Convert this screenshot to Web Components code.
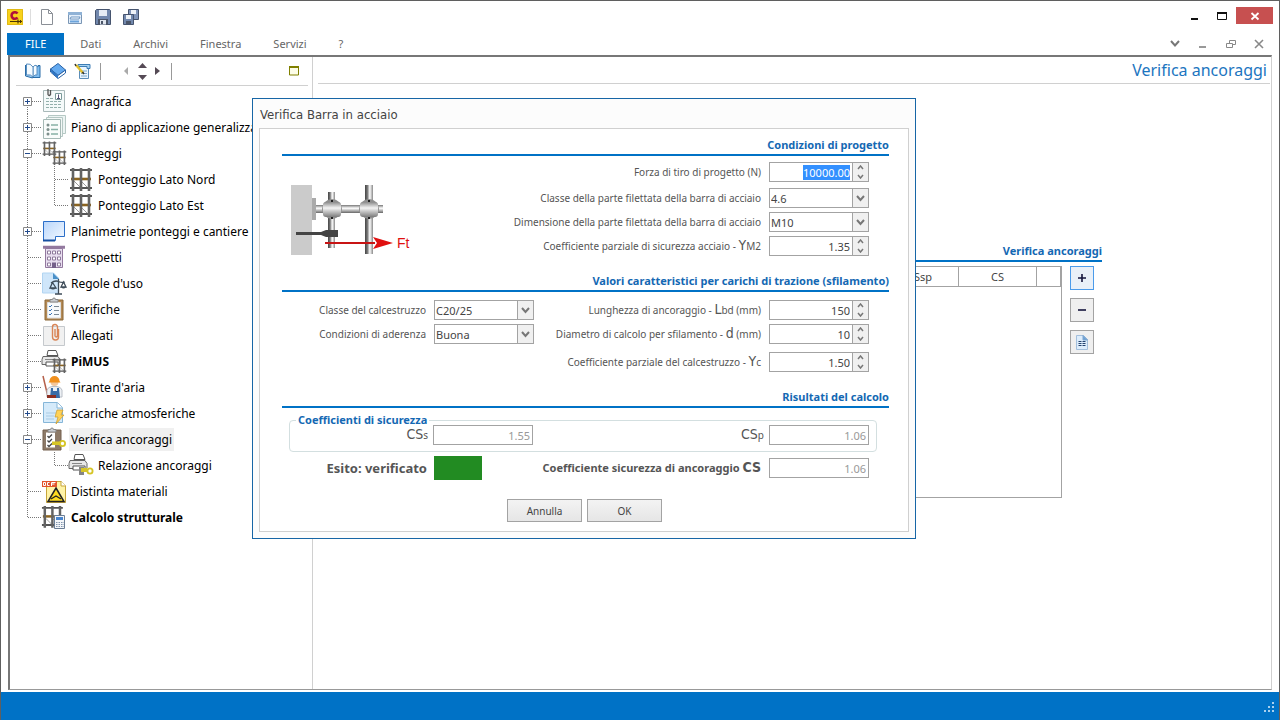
<!DOCTYPE html>
<html lang="it">
<head>
<meta charset="utf-8">
<title>Verifica ancoraggi</title>
<style>
  :root {
    --blue: #0072c6;
    --heading: #1468b3;
    --line: #a3a3a3;
    --soft-line: #d0d0d0;
    --text: #555;
    --font-ui: "Noto Sans", "Open Sans", sans-serif;
    --font-narrow: "DejaVu Sans Condensed", "DejaVu Sans", sans-serif;
    --fs-s: 10px;
    --fs-m: 11px;
    --fs-tree: 12px;
    --fs-l: 13px;
    --fs-xl: 16px;
  }
  html, body { height: 100%; margin: 0; }
  body { font-family: var(--font-ui); font-size: var(--fs-m); color: var(--text); background: #fff; }
  .sym { font-family: var(--font-narrow); font-size: 14px; line-height: 1; }
  .fields { display: flex; flex-direction: column; gap: 4px; }
  .lead { margin-bottom: 2px; }
  .spaced { margin-bottom: 4px; }
  .design { display: grid; grid-template-columns: auto 1fr; padding: 6px 20px 0 8px; }
  .design bar-diagram { align-self: end; }
  .columns { display: grid; grid-template-columns: 252px 1fr; padding: 8px 20px 0 0; align-items: start; }
  .outcome { padding-top: 4px; align-items: center; }
</style>
</head>
<body>
<app-window>
  <title-bar slot="top"></title-bar>
  <menu-bar slot="top"></menu-bar>

  <side-panel slot="side">
    <tree-item icon="anagrafica" toggle="plus" first>Anagrafica</tree-item>
    <tree-item icon="piano" toggle="plus">Piano di applicazione generalizzata</tree-item>
    <tree-item icon="ponteggi" toggle="minus">Ponteggi</tree-item>
    <tree-item icon="ponteggio" child>Ponteggio Lato Nord</tree-item>
    <tree-item icon="ponteggio" child last>Ponteggio Lato Est</tree-item>
    <tree-item icon="planimetrie" toggle="plus">Planimetrie ponteggi e cantiere</tree-item>
    <tree-item icon="prospetti">Prospetti</tree-item>
    <tree-item icon="regole">Regole d'uso</tree-item>
    <tree-item icon="verifiche">Verifiche</tree-item>
    <tree-item icon="allegati">Allegati</tree-item>
    <tree-item icon="pimus" bold>PiMUS</tree-item>
    <tree-item icon="tirante" toggle="plus">Tirante d'aria</tree-item>
    <tree-item icon="scariche" toggle="plus">Scariche atmosferiche</tree-item>
    <tree-item icon="ancoraggi" toggle="minus" selected>Verifica ancoraggi</tree-item>
    <tree-item icon="relazione" child last>Relazione ancoraggi</tree-item>
    <tree-item icon="distinta">Distinta materiali</tree-item>
    <tree-item icon="calcolo" bold last>Calcolo strutturale</tree-item>
  </side-panel>

  <work-area slot="main">
    <span slot="title">Verifica ancoraggi</span>
    <anchor-list></anchor-list>
  </work-area>

  <modal-dialog slot="dialog" heading="Verifica Barra in acciaio">
    <form-section heading="Condizioni di progetto">
      <div class="design">
        <bar-diagram></bar-diagram>
        <div class="fields">
          <spin-field class="lead" value="10000.00" active>Forza di tiro di progetto (N)</spin-field>
          <choice-field value="4.6">Classe della parte filettata della barra di acciaio</choice-field>
          <choice-field value="M10">Dimensione della parte filettata della barra di acciaio</choice-field>
          <spin-field value="1.35">Coefficiente parziale di sicurezza acciaio - <span class="sym">Y</span>M2</spin-field>
        </div>
      </div>
    </form-section>

    <form-section heading="Valori caratteristici per carichi di trazione (sfilamento)">
      <div class="columns">
        <div class="fields">
          <choice-field value="C20/25">Classe del calcestruzzo</choice-field>
          <choice-field value="Buona">Condizioni di aderenza</choice-field>
        </div>
        <div class="fields">
          <spin-field value="150">Lunghezza di ancoraggio - <span class="sym">L</span>bd (mm)</spin-field>
          <spin-field class="spaced" value="10">Diametro di calcolo per sfilamento - <span class="sym">d</span> (mm)</spin-field>
          <spin-field value="1.50">Coefficiente parziale del calcestruzzo - <span class="sym">Y</span>c</spin-field>
        </div>
      </div>
    </form-section>

    <form-section heading="Risultati del calcolo">
      <result-group heading="Coefficienti di sicurezza">
        <result-field value="1.55"><span class="sym">CS</span>s</result-field>
        <result-field value="1.06"><span class="sym">CS</span>p</result-field>
      </result-group>
      <div class="columns outcome">
        <outcome-badge>Esito: verificato</outcome-badge>
        <result-field strong value="1.06">Coefficiente sicurezza di ancoraggio <span class="sym">CS</span></result-field>
      </div>
    </form-section>

    <push-button slot="actions">Annulla</push-button>
    <push-button slot="actions">OK</push-button>
  </modal-dialog>
</app-window>

<script>
// Drawings, each one on the grid given by its size
const scaffold = (x, y, s) => `
  <g transform="translate(${x} ${y}) scale(${s})" fill="none">
    <path d="M5 14l7 7M12 14l7 7" stroke="#9a9a9a"/>
    <path d="M1 3h22M1 21h22" stroke="#555" stroke-width="2"/>
    <path d="M2 12h20" stroke="#8b6420" stroke-width="2.6"/>
    <path d="M4 1v23M12 1v23M20 1v23" stroke="#636363" stroke-width="2.6"/>
  </g>`;
const clipboard = `
  <path d="M3 3h18v20H3z" fill="#b48a55" stroke="#8a6636"/>
  <path d="M5.500 5.500h13v15.500h-13z" fill="#f7fafc" stroke="#ddd"/>
  <path d="M8 4V2.500h2.500a1.500 1.500 0 0 1 3 0H16V5H8z" fill="#c9ccd0" stroke="#888"/>
  <path d="M7 9l1 1 2-2M7 13l1 1 2-2M7 17l1 1 2-2" fill="none" stroke="#3a73b5"/>
  <path d="M12 9.500h5M12 13.500h5M12 17.500h5" stroke="#7a8894"/>`;
const darkClipboard = `
  <path d="M1 3h18v20H1z" fill="#8d7a68" stroke="#75614e"/>
  <path d="M4 5.500h9v15H4z" fill="#fff"/>
  <path d="M6 4V2.500h2.500a1.500 1.500 0 0 1 3 0H14V5H6z" fill="#c9ccd0" stroke="#888"/>
  <path d="M5.500 9l1.500 1.500 3-3M5.500 13.500L7 15l3-3M5.500 18L7 19.500l3-3" fill="none" stroke="#444" stroke-width="1.300"/>
  <path d="M10 14.500h8v3.500h-8z" fill="#d6c526"/><circle cx="20.500" cy="16.500" r="2.600" fill="#fff" stroke="#d6c526" stroke-width="1.800"/>`;
const printer = `
  <path d="M6 1.500h8l2 5H5z" fill="#fff" stroke="#555"/>
  <path d="M1 7.500h15l2 3v5H0v-5z" fill="#e8e8e8" stroke="#666"/>
  <path d="M4 13h12v4H4z" fill="#fff" stroke="#555"/><path d="M3 10.500h10" stroke="#888"/>`;
const key = `
  <path d="M12 15h6v4h-6z" fill="#d6c526"/><circle cx="21" cy="18" r="2.600" fill="#fff" stroke="#d6c526" stroke-width="1.800"/>`;

const ICONS = {
  anagrafica: [24, `<path d="M1.500 1.500h21v21h-21z" fill="#f5fafa" stroke="#a9b9b9"/>
    <path d="M6 0v5.500q1 2 2.500 0V1" fill="none" stroke="#555" stroke-width="1.300"/>
    <path d="M13.500 4.500h6v6h-6z" fill="#fff" stroke="#7b9a9a"/><path d="M16.500 5.500v4M15 9.500h3" stroke="#557"/>
    <path d="M4 9.500h7M4 12.500h16M4 15.500h16M4 18.500h16" stroke="#94b0ac" stroke-dasharray="3 1"/>`],
  piano: [24, `<path d="M6.500.500h17v18h-17z" fill="#edf4f3" stroke="#b5c8c4"/><path d="M4.500 2.500h16v19h-16z" fill="#f3f8f7" stroke="#b5c8c4"/>
    <path d="M1.500 4.500h17v19h-17z" fill="#f9fcfb" stroke="#a5b9b5"/>
    <g fill="#7d8f8c"><circle cx="6" cy="10" r="1.500"/><circle cx="6" cy="14.500" r="1.500"/><circle cx="6" cy="19" r="1.500"/></g>
    <path d="M9 10h7M9 14.500h7M9 19h7" stroke="#86b0a5" stroke-width="1.600"/>`],
  ponteggi: [24, scaffold(0, 0, .62) + scaffold(10, 9, .62)],
  ponteggio: [24, scaffold(0, 0, 1)],
  planimetrie: [24, `<defs><linearGradient id="g" x2="1" y2="1"><stop stop-color="#b9d6fb"/><stop offset="1" stop-color="#f4f9ff"/></linearGradient></defs>
    <path d="M1.500 2.500h21v15h-9v4h-12z" fill="url(#g)" stroke="#2c6fc9"/><path d="M1 21.500h12" stroke="#174fa0" stroke-width="2"/>`],
  prospetti: [24, `<path d="M3.500 3.500h17v19h-17z" fill="#e9dff0" stroke="#93799f"/><path d="M1 1.500h22M1 3h22" stroke="#93799f" stroke-width="1.500"/>
    <path d="M5.500 6h3v3h-3zM10.500 6h3v3h-3zM15.500 6h3v3h-3zM5.500 12h3v3h-3zM10.500 12h3v3h-3zM15.500 12h3v3h-3zM5.500 18h3v3h-3zM15.500 18h3v3h-3z" fill="#fff" stroke="#8e7a9c"/>
    <path d="M10 17.500h4V23h-4z" fill="#75608a"/>`],
  regole: [24, `<path d="M.500 2h11l5 5v15h-16z" fill="#cfe6fa" stroke="#b2d5f2"/><path d="M11 2l6 6h-6z" fill="#4a90c8"/>
    <g fill="none" stroke="#3e4c59" stroke-width="1.300"><path d="M16.500 8v15M13 23h7M9 12q4-3 7.500-1.500T23 11M10.500 11.500L8 17h6zM21.500 11L19 16h5z"/></g>
    <path d="M8 17h6q-3 3-6 0M19 16h5q-2.500 3-5 0" fill="#3e4c59"/>`],
  verifiche: [24, clipboard],
  allegati: [24, `<path d="M1.500 3.500h21v19h-21z" fill="#f1f1f1" stroke="#c5c9cd"/>
    <path d="M16.500 6v8a3 3 0 0 1-6 0V4a2.500 2.500 0 0 1 5 0v9q-1.500 2-2.500 0V6" fill="none" stroke="#d98557" stroke-width="1.400"/>`],
  pimus: [24, printer + scaffold(10, 9, .62)],
  tirante: [24, `<path d="M1 1l5 21" stroke="#b5604a" stroke-width="1.500"/><circle cx="12.500" cy="7" r="4" fill="#f3c79d"/>
    <path d="M7.500 6a5 5 0 0 1 10 0l1 1.500h-12z" fill="#f0901e"/><path d="M5 22V15q1-3 5-3.500h5q4 .500 5 3.500v7z" fill="#eef1f5" stroke="#b9bec6"/>
    <path d="M9 13h2v3h4v-3h2l1 10H8z" fill="#386ca7"/><path d="M5 21.500h9" stroke="#8c2f22" stroke-width="3"/>`],
  scariche: [24, `<path d="M1.500 1.500h14l5 5v15h-19z" fill="#d5eafa" stroke="#86b6d8"/><path d="M15 1.500V7h5.500" fill="#fff" stroke="#86b6d8"/>
    <path d="M4 12h10M4 15h8M4 18h8" stroke="#a9cbe4"/><path d="M15 9h6l-2 5h3l-8 9 2-7h-3z" fill="#ffd257" stroke="#c99a2b" stroke-width=".700"/>`],
  ancoraggi: [24, darkClipboard],
  relazione: [24, printer + `<path d="M10 14v8h5v-8z" fill="#858585"/>` + key],
  distinta: [24, `<path d="M4.500 2.500h15l4 4v17h-19z" fill="#fff3a6" stroke="#c7a53a"/><path d="M19 2v5h5" fill="#fff" stroke="#c7a53a"/>
    <path d="M14 9l8 13.500H6z" fill="#ffdc1f" stroke="#222" stroke-width="1.500"/><path d="M9 20l5-3 5 3" fill="none" stroke="#222" stroke-width="1.300"/>
    <path d="M0 2h15v6H0z" fill="#e2552c"/><path d="M1.500 3.500v3h2v-3zM7.500 3.500h-2v3h2M9.500 7V3.500h4M9.500 5h3" fill="none" stroke="#fff"/>`],
  calcolo: [24, scaffold(-1, 0, .95) + `<path d="M12.500 10.500h10v13h-10z" fill="#f4f6f9" stroke="#6a7d95"/><path d="M14 12h7v3h-7z" fill="#4a86cf"/>
    <path d="M14 17.500h8M14 19.500h8M14 21.500h8" stroke="#8094ad" stroke-dasharray="1.500 1"/>`],
  logo: [16, `<path d="M0 0h16v16H0z" fill="#f8d21c"/><path d="M.500.500h15v15H.500z" fill="none" stroke="#e0b915"/>
    <path d="M10.500 4.500A3.300 3.300 0 1 0 10.500 8.500" fill="none" stroke="#b0103a" stroke-width="2.600"/><path d="M3 12.500h12M11 10.500v4M13.500 11v3" stroke="#4b3505" stroke-width="1.200"/>`],
  blank: [16, `<path d="M2.500.500h7l4 4v11h-11z" fill="#fff" stroke="#8a8f96"/><path d="M9.500.500v4h4" fill="none" stroke="#8a8f96"/>`],
  open: [16, `<path d="M1.500 3.500h13v11h-13z" fill="#e4effb" stroke="#7a96b5"/><path d="M1 3h14v3H1z" fill="#8fb2d6"/><path d="M4 8h9l-1 2H3z" fill="#fff" stroke="#6b95c2"/><path d="M3 12.500h9" stroke="#6ba3da" stroke-width="2"/>`],
  save: [16, `<path d="M.500 1.500l1-1h13l1 1v14H.500z" fill="#7288ad" stroke="#46546e"/><path d="M4 1h8v6H4z" fill="#e6ecf4"/><path d="M3 10h10v5.500H3z" fill="#4b5568"/><path d="M5 11h6v4.500H5z" fill="#dfe5ee"/><path d="M6 12h2v3H6z" fill="#4b5568"/>`],
  saveall: [16, `<path d="M5.500.500h10v10h-10z" fill="#8094b8" stroke="#46546e"/><path d="M8 1h5v4H8z" fill="#eef2f8"/>
    <path d="M.500 5.500h10v10H.500z" fill="#7288ad" stroke="#46546e"/><path d="M3 6h5v4H3z" fill="#eef2f8"/><path d="M3 12h5v3H3z" fill="#4b5568"/>`],
  bookopen: [16, `<path d="M8 4q3-3 5 0V2.500h2v12H6L8 13z" fill="#7fbdf0" stroke="#2a6da8"/><path d="M8 4q2-3 4-1v9q-2-1-4 2z" fill="#f5fbff" stroke="#5a8fc0"/>
    <path d="M.500 2v11l7 2" fill="#9dcdf3" stroke="#2a6da8"/><path d="M1.500 1q4-1 6.500 3v10q-2-3-6.500-2z" fill="#f5fbff" stroke="#5a8fc0"/>`],
  book: [16, `<path d="M.500 6L8 .500 15.500 7 8 12.500z" fill="#64aaf0" stroke="#2862a6"/><path d="M.500 6v3L8 15.500l7.500-5.500V7L8 12.500z" fill="#fff" stroke="#2862a6"/><path d="M1 6.500L8 12.500v3L1 9z" fill="#2d74c4"/>`],
  note: [16, `<path d="M4.500 3.500h9v12h-9z" fill="#e9f5ff" stroke="#5b8db8"/><path d="M3 1.500h12v4h-3v-2H3z" fill="#a6d2f2" stroke="#3c7db5"/><path d="M6 8h6M6 10.500h6M6 13h6" stroke="#7ba6c9"/>
    <path d="M1 2l7 8" stroke="#e3c02c" stroke-width="2.500"/><path d="M0 1l1 2M7.500 9l1.500 2" stroke="#333" stroke-width="1.500"/>`],
  doc: [16, `<path d="M2.500 1.500h7l4 4v10h-11z" fill="#dcecfb" stroke="#a3bfdc"/><path d="M9 1.500V6h4.500z" fill="#6ba0d6" stroke="#7ea7cf"/><path d="M4.500 7.500h3M4.500 9.500h3M4.500 11.500h3M8.500 7.500h3M8.500 9.500h3M8.500 11.500h3" stroke="#24436e"/>`],
  plus: [16, `<path d="M8 4v8M4 8h8" stroke="#14143c" stroke-width="1.600"/>`],
  minus: [16, `<path d="M4 8h8" stroke="#14143c" stroke-width="1.600"/>`],
  left: [8, `<path d="M6 0v8L2 4z" fill="#aaa"/>`],
  right: [8, `<path d="M1 0v8l5-4z" fill="#554a55"/>`],
  up: [8, `<path d="M0 6h9L4.500 1z" fill="#554a55"/>`],
  down: [8, `<path d="M0 2h9L4.500 7z" fill="#554a55"/>`],
  square: [10, `<path d="M.500 1h9v8h-9z" fill="#fdfde8" stroke="#808000"/><path d="M0 1h10" stroke="#808000" stroke-width="2"/>`],
  winmin: [10, `<path d="M1 8h7" stroke="#111" stroke-width="2"/>`],
  winmax: [10, `<path d="M.500 1.500h9v7h-9z" fill="none" stroke="#111"/><path d="M0 2h10" stroke="#111" stroke-width="2"/>`],
  winclose: [10, `<path d="M1.500 2l7 6.500M8.500 2l-7 6.500" stroke="#fff" stroke-width="1.800"/>`],
  chev: [10, `<path d="M1 2l4 4.500L9 2" fill="none" stroke="#777" stroke-width="2"/>`],
  submin: [10, `<path d="M1 8h7" stroke="#999" stroke-width="2"/>`],
  restore: [10, `<path d="M3.500 4V1.500h6v4H7M.500 4.500h6v4h-6z" fill="none" stroke="#888"/>`],
  subclose: [10, `<path d="M1 1l8 8M9 1L1 9" stroke="#888" stroke-width="1.600"/>`]
};

class AppIcon extends HTMLElement {
  connectedCallback() {
    const [size, art] = ICONS[this.getAttribute('name')];
    this.attachShadow({ mode: 'open' }).innerHTML = `
      <style>:host { display: block; flex: none; } svg { display: block; overflow: visible; }</style>
      <svg width="${size}" height="${size}" viewBox="0 0 ${size} ${size}" aria-hidden="true">${art}</svg>`;
  }
}

class AppWindow extends HTMLElement {
  connectedCallback() {
    this.attachShadow({ mode: 'open' }).innerHTML = `
      <style>
        :host { display: flex; flex-direction: column; height: 100vh; box-sizing: border-box; position: relative;
                border: 1px solid #5f5f5f; border-bottom: 0; overflow: hidden; }
        .body { flex: 1; display: flex; min-height: 0; margin: 0 7px 2px 7px; border: 1px solid var(--soft-line);
                border-top: 2px solid #777; border-left: 2px solid #777; border-bottom-color: #999; }
        .main { flex: 1; min-width: 0; display: flex; }
        footer { height: 28px; background: var(--blue); margin: 0 -1px; display: flex; justify-content: flex-end; align-items: flex-end; }
        footer svg { margin: 0 6px 8px 0; }
      </style>
      <slot name="top"></slot>
      <div class="body">
        <slot name="side"></slot>
        <div class="main"><slot name="main"></slot></div>
      </div>
      <footer><svg width="10" height="10" fill="#a9d0ee"><path d="M8 0h2v2H8zM8 4h2v2H8zM8 8h2v2H8zM4 4h2v2H4zM4 8h2v2H4zM0 8h2v2H0z"/></svg></footer>
      <slot name="dialog"></slot>`;
  }
}

class TitleBar extends HTMLElement {
  connectedCallback() {
    this.attachShadow({ mode: 'open' }).innerHTML = `
      <style>
        :host { display: flex; align-items: center; height: 31px; padding: 0 6px; }
        button { border: 0; padding: 0; background: none; display: grid; place-items: center; }
        .tools { display: flex; align-items: center; gap: 12px; flex: 1; }
        .sep { width: 1px; height: 16px; background: #ddd; margin: 0 -4px 0 -5px; }
        .win { display: flex; align-self: flex-start; margin-top: 6px; }
        .win button { width: 27px; height: 17px; }
        .win .close { width: 37px; background: #c75050; margin-left: 1px; }
      </style>
      <div class="tools">
        <app-icon name="logo"></app-icon><span class="sep"></span>
        ${['blank', 'open', 'save', 'saveall'].map(n => `<button aria-label="${n}"><app-icon name="${n}"></app-icon></button>`).join('')}
      </div>
      <div class="win">
        <button aria-label="Riduci"><app-icon name="winmin"></app-icon></button>
        <button aria-label="Ingrandisci"><app-icon name="winmax"></app-icon></button>
        <button class="close" aria-label="Chiudi"><app-icon name="winclose"></app-icon></button>
      </div>`;
  }
}

class MenuBar extends HTMLElement {
  connectedCallback() {
    this.attachShadow({ mode: 'open' }).innerHTML = `
      <style>
        :host { display: flex; align-items: center; height: 23px; padding: 0 15px 0 6px; }
        button { border: 0; padding: 0 16px; height: 22px; background: none; font: inherit; color: #666; }
        .file { background: var(--blue); color: #fff; padding: 0 18px; }
        nav { display: flex; flex: 1; }
        .win { display: flex; gap: 18px; }
        .win button { padding: 0; height: auto; }
      </style>
      <nav>
        <button class="file">FILE</button>
        ${['Dati', 'Archivi', 'Finestra', 'Servizi', '?'].map(t => `<button>${t}</button>`).join('')}
      </nav>
      <div class="win">
        ${['chev', 'submin', 'restore', 'subclose'].map(n => `<button aria-label="${n}"><app-icon name="${n}"></app-icon></button>`).join('')}
      </div>`;
  }
}

class SidePanel extends HTMLElement {
  connectedCallback() {
    this.attachShadow({ mode: 'open' }).innerHTML = `
      <style>
        :host { display: flex; flex-direction: column; width: 303px; flex: none; box-sizing: border-box;
                border-right: 1px solid var(--soft-line); overflow: hidden; }
        .tools { display: flex; align-items: center; gap: 9px; height: 28px; margin: 0 4px 0 6px; padding: 0 9px; border-bottom: 1px solid var(--soft-line); }
        button { border: 0; padding: 0; background: none; }
        .sep { width: 1px; height: 17px; background: #999; }
        .move { display: flex; align-items: center; gap: 8px; margin: 0 0 0 12px; }
        .stack { display: flex; flex-direction: column; gap: 3px; }
        .pin { margin-left: auto; }
        .tree { padding-top: 2px; }
      </style>
      <div class="tools">
        ${['bookopen', 'book', 'note'].map(n => `<button aria-label="${n}"><app-icon name="${n}"></app-icon></button>`).join('')}
        <span class="sep"></span>
        <div class="move">
          <button aria-label="Indietro"><app-icon name="left"></app-icon></button>
          <div class="stack">
            <button aria-label="Su"><app-icon name="up"></app-icon></button>
            <button aria-label="Giù"><app-icon name="down"></app-icon></button>
          </div>
          <button aria-label="Avanti"><app-icon name="right"></app-icon></button>
        </div>
        <span class="sep"></span>
        <button class="pin" aria-label="Riduci pannello"><app-icon name="square"></app-icon></button>
      </div>
      <div class="tree" role="tree"><slot></slot></div>`;
  }
}

class TreeItem extends HTMLElement {
  connectedCallback() {
    const has = name => this.hasAttribute(name);
    const toggle = this.getAttribute('toggle');
    const dots = 'fill="none" stroke="#777" stroke-dasharray="1 1"';
    // trunk of the root level; a nested row also gets a branch of its own
    const trunkTop = has('first') ? 13 : 0;
    const trunkEnd = has('last') && !has('child') ? 13 : 26;
    const branch = has('child')
      ? `<path d="M44.500 0V${has('last') ? 13 : 26}M45 13.500h14" ${dots}/>`
      : `<path d="M18 13.500h14" ${dots}/>`;
    const box = toggle
      ? `<path d="M13.500 9.500h8v8h-8z" fill="#fff" stroke="#888"/><path d="M15 13.500h5${toggle === 'plus' ? 'M17.500 11v5' : ''}" stroke="#234b8c"/>`
      : '';
    this.attachShadow({ mode: 'open' }).innerHTML = `
      <style>
        :host { display: flex; align-items: center; height: 26px; font-size: var(--fs-tree); color: #000; white-space: nowrap; }
        :host([bold]) { font-weight: 700; }
        svg { flex: none; }
        .label { margin-left: 3px; padding: 0 2px; line-height: 23px; }
        :host([selected]) .label { background: #f0f0f0; }
      </style>
      <svg width="${has('child') ? 59 : 32}" height="26" aria-hidden="true">
        <path d="M17.500 ${trunkTop}V${trunkEnd}" ${dots}/>${branch}${box}
      </svg>
      <app-icon name="${this.getAttribute('icon')}"></app-icon>
      <span class="label"><slot></slot></span>`;
    this.setAttribute('role', 'treeitem');
  }
}

class WorkArea extends HTMLElement {
  connectedCallback() {
    this.attachShadow({ mode: 'open' }).innerHTML = `
      <style>
        :host { display: block; flex: 1; min-width: 0; }
        h1 { margin: 0 1px 0 5px; padding: 0 3px; text-align: right; font-size: var(--fs-xl); font-weight: 400; line-height: 26px;
             color: #1c75c0; border-bottom: 1px solid var(--soft-line); }
      </style>
      <h1><slot name="title"></slot></h1>
      <slot></slot>`;
  }
}

class AnchorList extends HTMLElement {
  connectedCallback() {
    this.attachShadow({ mode: 'open' }).innerHTML = `
      <style>
        :host { display: block; margin: 160px 169px 0 20px; }
        h2 { margin: 0; padding-bottom: 2px; font-size: var(--fs-m); line-height: 14px; text-align: right; color: var(--heading); border-bottom: 2px solid var(--blue); }
        .row { display: flex; gap: 8px; padding: 4px 8px 0 0; }
        .grid { flex: 1; height: 230px; border: 1px solid var(--line); }
        table { width: 100%; border-collapse: collapse; table-layout: fixed; }
        th { height: 19px; padding: 0; font-size: var(--fs-m); font-weight: 400; line-height: 19px; color: #444;
             border-right: 1px solid var(--line); border-bottom: 1px solid var(--line); }
        .mid { width: 77px; } .end { width: 23px; }
        .actions { display: flex; flex-direction: column; gap: 8px; }
        button { width: 24px; height: 24px; padding: 0; display: grid; place-items: center; background: #efefef; border: 1px solid var(--line); }
        button:first-child { border-color: #4b9bea; background: #e9f0f8; }
      </style>
      <h2>Verifica ancoraggi</h2>
      <div class="row">
        <div class="grid">
          <table><thead><tr><th></th><th class="mid">CSsp</th><th class="mid">CS</th><th class="end"></th></tr></thead></table>
        </div>
        <div class="actions">
          <button aria-label="Aggiungi"><app-icon name="plus"></app-icon></button>
          <button aria-label="Rimuovi"><app-icon name="minus"></app-icon></button>
          <button aria-label="Dettagli"><app-icon name="doc"></app-icon></button>
        </div>
      </div>`;
  }
}

class ModalDialog extends HTMLElement {
  connectedCallback() {
    this.attachShadow({ mode: 'open' }).innerHTML = `
      <style>
        :host { display: block; position: absolute; left: 251px; top: 97px; width: 664px; box-sizing: border-box;
                padding: 0 6px 6px; background: #fcfcfc; border: 1px solid #1766a6; }
        h1 { margin: 0; padding: 2px 0 0 1px; font-family: var(--font-narrow); font-size: var(--fs-l); font-weight: 400; line-height: 27px; color: #444; }
        .panel { display: flex; flex-direction: column; gap: 18px; padding: 9px 19px 9px 22px; background: #fff; border: 1px solid var(--soft-line); }
        .actions { display: flex; justify-content: center; gap: 5px; padding: 1px 2px 0 0; }
      </style>
      <h1>${this.getAttribute('heading')}</h1>
      <div class="panel">
        <slot></slot>
        <div class="actions"><slot name="actions"></slot></div>
      </div>`;
    this.setAttribute('role', 'dialog');
  }
}

class FormSection extends HTMLElement {
  connectedCallback() {
    this.attachShadow({ mode: 'open' }).innerHTML = `
      <style>
        :host { display: block; }
        h2 { margin: 0; padding-bottom: 2px; font-size: var(--fs-m); line-height: 14px; text-align: right; color: var(--heading); border-bottom: 2px solid var(--blue); }
      </style>
      <h2>${this.getAttribute('heading')}</h2>
      <slot></slot>`;
  }
}

const fieldStyle = `
  :host { display: flex; align-items: center; justify-content: flex-end; gap: 8px; height: 20px; font-size: var(--fs-s); }
  label { white-space: nowrap; line-height: 20px; }
  .box { display: flex; width: 100px; height: 20px; box-sizing: border-box; border: 1px solid var(--line); background: #fff; }
  input, select { font: inherit; font-size: var(--fs-m); color: #444; border: 0; outline: 0; margin: 0; background: none; min-width: 0; flex: 1; }
  input { text-align: right; padding: 0 2px; }
  svg { display: block; }`;

class SpinField extends HTMLElement {
  connectedCallback() {
    this.attachShadow({ mode: 'open' }).innerHTML = `
      <style>${fieldStyle}
        .steps { display: flex; flex-direction: column; width: 15px; border-left: 1px solid var(--line); background: #f0f0f0; }
        button { flex: 1; border: 0; padding: 0; background: none; display: grid; place-items: center; }
        input::selection { background: #3390ff; color: #fff; }
      </style>
      <label for="value"><slot></slot></label>
      <div class="box">
        <input id="value" type="text" inputmode="decimal" value="${this.getAttribute('value')}">
        <div class="steps">
          <button aria-label="Aumenta" tabindex="-1"><svg width="7" height="5"><path d="M1 4l2.500-3L6 4" fill="none" stroke="#777" stroke-width="1.500"/></svg></button>
          <button aria-label="Diminuisci" tabindex="-1"><svg width="7" height="5"><path d="M1 1l2.500 3L6 1" fill="none" stroke="#777" stroke-width="1.500"/></svg></button>
        </div>
      </div>`;
    if (this.hasAttribute('active')) {
      const input = this.shadowRoot.querySelector('input');
      input.focus();
      input.select();
    }
  }
}

class ChoiceField extends HTMLElement {
  connectedCallback() {
    this.attachShadow({ mode: 'open' }).innerHTML = `
      <style>${fieldStyle}
        .box { display: grid; grid-template-columns: 1fr 16px; }
        select { appearance: none; grid-area: 1 / 1 / 2 / 3; padding: 0 16px 0 1px; }
        .arrow { grid-area: 1 / 2; display: grid; place-items: center; border-left: 1px solid var(--line); background: #f0f0f0; pointer-events: none; }
      </style>
      <label for="value"><slot></slot></label>
      <div class="box">
        <select id="value"><option>${this.getAttribute('value')}</option></select>
        <span class="arrow"><svg width="9" height="7"><path d="M1 1l3.500 4L8 1" fill="none" stroke="#777" stroke-width="2"/></svg></span>
      </div>`;
  }
}

class ResultField extends HTMLElement {
  connectedCallback() {
    this.attachShadow({ mode: 'open' }).innerHTML = `
      <style>${fieldStyle}
        :host { gap: 5px; }
        :host([strong]) { gap: 8px; font-size: var(--fs-m); font-weight: 700; }
        input { color: #999; font-weight: 400; }
      </style>
      <label for="value"><slot></slot></label>
      <div class="box"><input id="value" type="text" readonly value="${this.getAttribute('value')}"></div>`;
  }
}

class ResultGroup extends HTMLElement {
  connectedCallback() {
    this.attachShadow({ mode: 'open' }).innerHTML = `
      <style>
        :host { display: block; padding: 7px 12px 0 7px; }
        fieldset { margin: 0; padding: 0 7px 6px 0; border: 1px solid #d3dfe0; border-radius: 4px; min-width: 0; }
        legend { margin-left: 6px; padding: 0 2px; font-size: var(--fs-m); font-weight: 700; line-height: 10px; color: var(--heading); }
        .values { display: grid; grid-template-columns: 243px 1fr; }
      </style>
      <fieldset>
        <legend>${this.getAttribute('heading')}</legend>
        <div class="values"><slot></slot></div>
      </fieldset>`;
  }
}

class OutcomeBadge extends HTMLElement {
  connectedCallback() {
    this.attachShadow({ mode: 'open' }).innerHTML = `
      <style>
        :host { display: flex; align-items: center; justify-content: flex-end; gap: 7px; font-size: var(--fs-l); font-weight: 700; margin-right: 52px; white-space: nowrap; }
        .lamp { width: 48px; height: 24px; background: #228b22; }
      </style>
      <slot></slot><span class="lamp"></span>`;
  }
}

class PushButton extends HTMLElement {
  connectedCallback() {
    this.attachShadow({ mode: 'open' }).innerHTML = `
      <style>
        :host { display: block; }
        button { width: 75px; height: 23px; padding: 0; font: inherit; font-size: var(--fs-s); color: #444;
                 border: 1px solid var(--line); background: linear-gradient(#f3f3f3, #e6e6e6); }
      </style>
      <button><slot></slot></button>`;
  }
}

// Wall, coupled tubes and tie bar, with the pull force Ft
class BarDiagram extends HTMLElement {
  connectedCallback() {
    this.attachShadow({ mode: 'open' }).innerHTML = `
      <style>:host, svg { display: block; } text { font-family: "Liberation Sans", sans-serif; font-size: 14px; fill: #e01010; }</style>
      <svg width="124" height="72" role="img" aria-label="Forza di tiro Ft">
        <defs>
          <linearGradient id="v"><stop stop-color="#444"/><stop offset=".3" stop-color="#777"/><stop offset=".6" stop-color="#fff"/><stop offset="1" stop-color="#888"/></linearGradient>
          <linearGradient id="h" x2="0" y2="1"><stop stop-color="#777"/><stop offset=".4" stop-color="#fff"/><stop offset="1" stop-color="#666"/></linearGradient>
          <linearGradient id="b" x2="0" y2="1"><stop stop-color="#8a8a8a"/><stop offset=".4" stop-color="#f4f4f4"/><stop offset="1" stop-color="#7c7c7c"/></linearGradient>
        </defs>
        <path d="M1 1h21v70H1z" fill="#cbcbcb"/>
        <path d="M22 14h4v22h-4z" fill="#aaa"/>
        <path d="M26 21h67v8H26z" fill="url(#h)"/>
        <path d="M38 8h7v56h-7z" fill="url(#v)"/>
        <path d="M75 1h8v69h-8z" fill="url(#v)"/>
        <circle cx="42" cy="25" r="10" fill="#8f8f8f"/><circle cx="79" cy="25" r="10" fill="#8f8f8f"/>
        <rect x="33" y="18" width="18" height="15" rx="3" fill="url(#b)"/><rect x="70" y="18" width="18" height="15" rx="3" fill="url(#b)"/>
        <path d="M41 16h2v2h-2zM78 16h2v2h-2zM41 33h2v2h-2zM78 33h2v2h-2z" fill="#222"/>
        <path d="M6 48h25l5-2h12v7H36l-5-2H6z" fill="#444"/>
        <path d="M35 58h50v2H35z" fill="#c81414"/><path d="M83 53l20 6-20 6 4-6z" fill="#e01010"/>
        <text x="107" y="64">Ft</text>
      </svg>`;
  }
}

customElements.define('app-icon', AppIcon);
customElements.define('app-window', AppWindow);
customElements.define('title-bar', TitleBar);
customElements.define('menu-bar', MenuBar);
customElements.define('side-panel', SidePanel);
customElements.define('tree-item', TreeItem);
customElements.define('work-area', WorkArea);
customElements.define('anchor-list', AnchorList);
customElements.define('modal-dialog', ModalDialog);
customElements.define('form-section', FormSection);
customElements.define('spin-field', SpinField);
customElements.define('choice-field', ChoiceField);
customElements.define('result-field', ResultField);
customElements.define('result-group', ResultGroup);
customElements.define('outcome-badge', OutcomeBadge);
customElements.define('push-button', PushButton);
customElements.define('bar-diagram', BarDiagram);
</script>
</body>
</html>
